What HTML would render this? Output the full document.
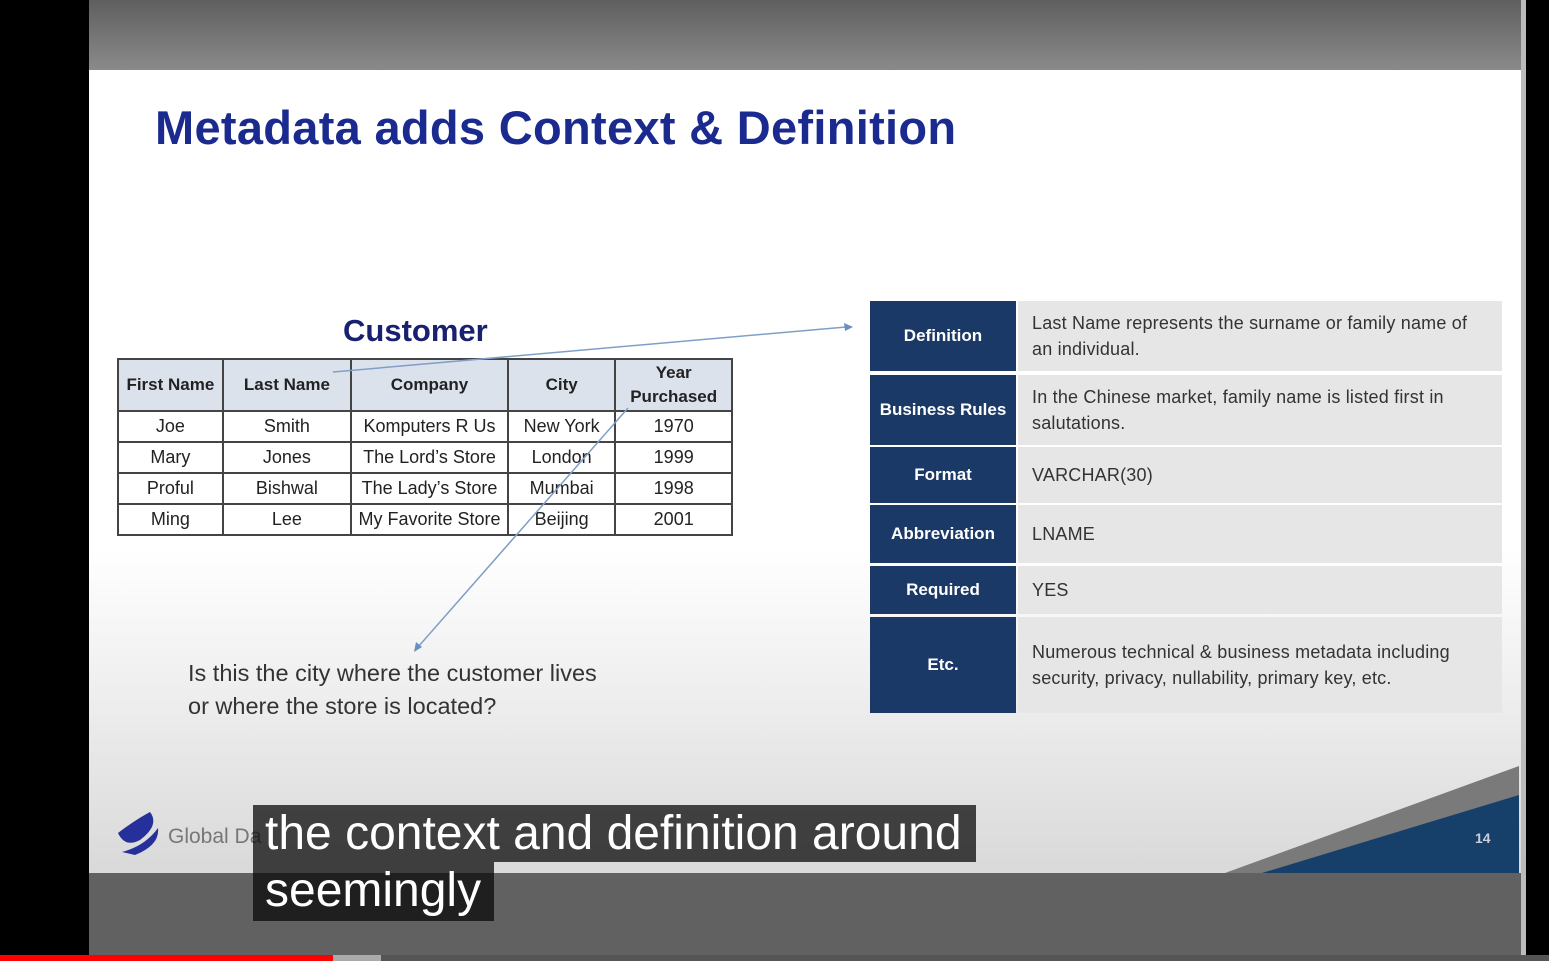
<!DOCTYPE html><html><head><style>
*{margin:0;padding:0;box-sizing:border-box}
body{width:1549px;height:961px;background:#000;position:relative;overflow:hidden;font-family:"Liberation Sans",sans-serif}
.a{position:absolute}
.slide{left:89px;top:70px;width:1432px;height:803px;background:linear-gradient(#fff 0,#fff 480px,#d9d9d9 803px)}
table{border-collapse:collapse}
.ct td{border:2px solid #444;text-align:center;font-size:18px;color:#222;height:31px;padding:0;white-space:nowrap}
.ct tr.h td{background:#dce2ec;font-weight:bold;height:52px;font-size:17px;line-height:24px}
.row{position:absolute;left:870px;width:632px}
.lb{position:absolute;left:0;top:0;bottom:0;width:146px;background:#1b3966;color:#fff;font-weight:bold;font-size:17px;display:flex;align-items:center;justify-content:center;text-align:center}
.vl{position:absolute;left:148px;right:0;top:0;bottom:0;background:#e6e6e6;color:#333;font-size:18px;letter-spacing:0.2px;line-height:26px;display:flex;align-items:center;padding-left:14px;padding-right:4px;white-space:nowrap;overflow:hidden}
.cap{background:rgba(10,10,10,.75);color:#fff;font-size:48px;line-height:57px;padding:0 12px;position:absolute;white-space:nowrap}
</style></head><body>
<div class="a" style="left:89px;top:0;width:1432px;height:70px;background:linear-gradient(#5f5f5f,#8a8a8a)"></div>
<div class="a slide"></div>
<div class="a" style="left:89px;top:873px;width:1432px;height:82px;background:#616161"></div>
<div class="a" style="left:1521px;top:0;width:5px;height:955px;background:#bbb"></div>
<div class="a" style="left:0;top:955px;width:1549px;height:6px;background:#555"></div>
<div class="a" style="left:0;top:955px;width:381px;height:6px;background:#aaa"></div>
<div class="a" style="left:0;top:955px;width:333px;height:6px;background:#f00"></div>

<div class="a" style="left:155px;top:100px;font-size:47px;font-weight:bold;color:#1b2a8e;white-space:nowrap;letter-spacing:0.3px">Metadata adds Context &amp; Definition</div>
<div class="a" style="left:343px;top:313px;font-size:31px;font-weight:bold;color:#1a2070">Customer</div>

<table class="a ct" style="left:117px;top:358px;width:616px">
<colgroup><col style="width:105px"><col style="width:129px"><col style="width:157px"><col style="width:108px"><col style="width:117px"></colgroup>
<tr class="h"><td>First Name</td><td>Last Name</td><td>Company</td><td>City</td><td>Year<br>Purchased</td></tr>
<tr><td>Joe</td><td>Smith</td><td>Komputers R Us</td><td>New York</td><td>1970</td></tr>
<tr><td>Mary</td><td>Jones</td><td>The Lord’s Store</td><td>London</td><td>1999</td></tr>
<tr><td>Proful</td><td>Bishwal</td><td>The Lady’s Store</td><td>Mumbai</td><td>1998</td></tr>
<tr><td>Ming</td><td>Lee</td><td>My Favorite Store</td><td>Beijing</td><td>2001</td></tr>
</table>

<svg class="a" style="left:0;top:0" width="1549" height="961">
<line x1="333" y1="372" x2="846" y2="327" stroke="#7f9fc8" stroke-width="1.5"/>
<polygon points="853,327 844,323 845,331" fill="#6a8fc0"/>
<line x1="628" y1="408" x2="418" y2="647" stroke="#7f9fc8" stroke-width="1.5"/>
<polygon points="414,652 416,642 422,647" fill="#6a8fc0"/>
<polygon points="1225,873 1519,766 1519,873" fill="#7a7a7a"/>
<polygon points="1262,873 1519,795 1519,873" fill="#163f6a"/>
<text x="1475" y="843" fill="#ccd" font-family="Liberation Sans" font-weight="bold" font-size="14">14</text>
<path d="M118 833 Q135 820 150 812 Q160 825 140 840 Q125 848 118 833Z" fill="#25309a"/>
<path d="M122 852 Q145 846 158 828 Q160 845 135 855Z" fill="#25309a"/>
</svg>
<div class="a" style="left:168px;top:825px;font-size:21px;color:#777">Global Da</div>

<div class="a" style="left:188px;top:657px;font-size:23.5px;line-height:33px;color:#333">Is this the city where the customer lives<br>or where the store is located?</div>

<div class="row" style="top:301px;height:70px"><div class="lb">Definition</div><div class="vl">Last Name represents the surname or family name of<br>an individual.</div></div>
<div class="row" style="top:375px;height:70px"><div class="lb">Business Rules</div><div class="vl">In the Chinese market, family name is listed first in<br>salutations.</div></div>
<div class="row" style="top:447px;height:56px"><div class="lb">Format</div><div class="vl">VARCHAR(30)</div></div>
<div class="row" style="top:505px;height:58px"><div class="lb">Abbreviation</div><div class="vl">LNAME</div></div>
<div class="row" style="top:566px;height:48px"><div class="lb">Required</div><div class="vl">YES</div></div>
<div class="row" style="top:617px;height:96px"><div class="lb">Etc.</div><div class="vl">Numerous technical &amp; business metadata including<br>security, privacy, nullability, primary key, etc.</div></div>

<div class="cap" style="left:253px;top:805px;width:723px">the context and definition around</div>
<div class="cap" style="left:253px;top:862px;width:241px;height:59px">seemingly</div>
</body></html>
